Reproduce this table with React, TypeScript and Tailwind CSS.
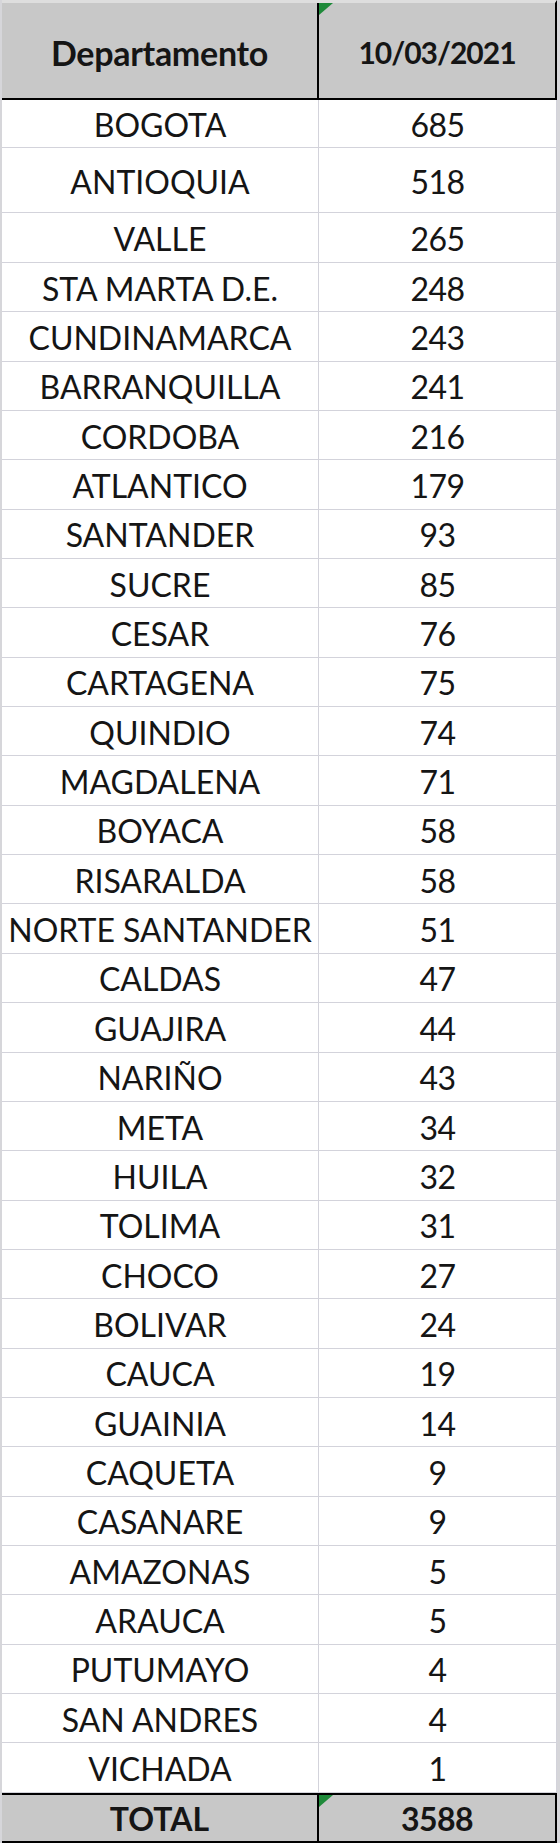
import React from "react";

const rows: [string, string][] = [
  ["BOGOTA", "685"],
  ["ANTIOQUIA", "518"],
  ["VALLE", "265"],
  ["STA MARTA D.E.", "248"],
  ["CUNDINAMARCA", "243"],
  ["BARRANQUILLA", "241"],
  ["CORDOBA", "216"],
  ["ATLANTICO", "179"],
  ["SANTANDER", "93"],
  ["SUCRE", "85"],
  ["CESAR", "76"],
  ["CARTAGENA", "75"],
  ["QUINDIO", "74"],
  ["MAGDALENA", "71"],
  ["BOYACA", "58"],
  ["RISARALDA", "58"],
  ["NORTE SANTANDER", "51"],
  ["CALDAS", "47"],
  ["GUAJIRA", "44"],
  ["NARIÑO", "43"],
  ["META", "34"],
  ["HUILA", "32"],
  ["TOLIMA", "31"],
  ["CHOCO", "27"],
  ["BOLIVAR", "24"],
  ["CAUCA", "19"],
  ["GUAINIA", "14"],
  ["CAQUETA", "9"],
  ["CASANARE", "9"],
  ["AMAZONAS", "5"],
  ["ARAUCA", "5"],
  ["PUTUMAYO", "4"],
  ["SAN ANDRES", "4"],
  ["VICHADA", "1"],
];

function heightClass(i: number): string {
  if (i === 0) return "h-[48px]";
  if (i === 1) return "h-[65px]";
  if (i === 2) return "h-[50px]";
  return "h-[49.35px]";
}

function GreenMark() {
  return (
    <svg
      className="absolute left-0 top-0"
      width="14"
      height="12"
      viewBox="0 0 14 12"
    >
      <polygon points="0,0 14,0 0,12" fill="#1f8a3a" />
    </svg>
  );
}

export default function App() {
  return (
    <div className="w-[560px] h-[1843px] bg-[#d6d6da] pl-[2px] pr-[3px] font-['Lato','Noto_Sans',sans-serif] text-[#151515]">
      <div className="flex h-[100px] border-t-[3px] border-t-[#dedede] border-b-2 border-b-black border-r-2 border-r-black bg-[#c8c8c8]">
        <div className="w-[317px] border-r-2 border-black flex items-center justify-center pt-[3px] text-[34px] tracking-[-0.3px] font-bold">
          Departamento
        </div>
        <div className="relative flex-1 flex items-center justify-center pt-[3px] text-[30px] tracking-[-1px] font-bold">
          <GreenMark />
          10/03/2021
        </div>
      </div>
      {rows.map(([name, value], i) => (
        <div
          key={name}
          className={`flex bg-white border-b border-[#d3d3db] border-r border-r-[#d3d3db] ${heightClass(i)}`}
        >
          <div className="w-[317px] border-r border-[#d3d3db] flex items-center justify-center pt-[3px] text-[32px] whitespace-nowrap">
            {name}
          </div>
          <div className="flex-1 flex items-center justify-center pt-[3px] text-[32px] tracking-[-0.5px]">
            {value}
          </div>
        </div>
      ))}
      <div className="flex h-[50px] bg-[#c8c8c8] border-t-2 border-t-black border-b-2 border-b-black border-r-2 border-r-black">
        <div className="w-[317px] border-r-2 border-black flex items-center justify-center pt-[2px] text-[32px] font-bold">
          TOTAL
        </div>
        <div className="relative flex-1 flex items-center justify-center pt-[2px] text-[32px] tracking-[-0.5px] font-bold">
          <GreenMark />
          3588
        </div>
      </div>
    </div>
  );
}
